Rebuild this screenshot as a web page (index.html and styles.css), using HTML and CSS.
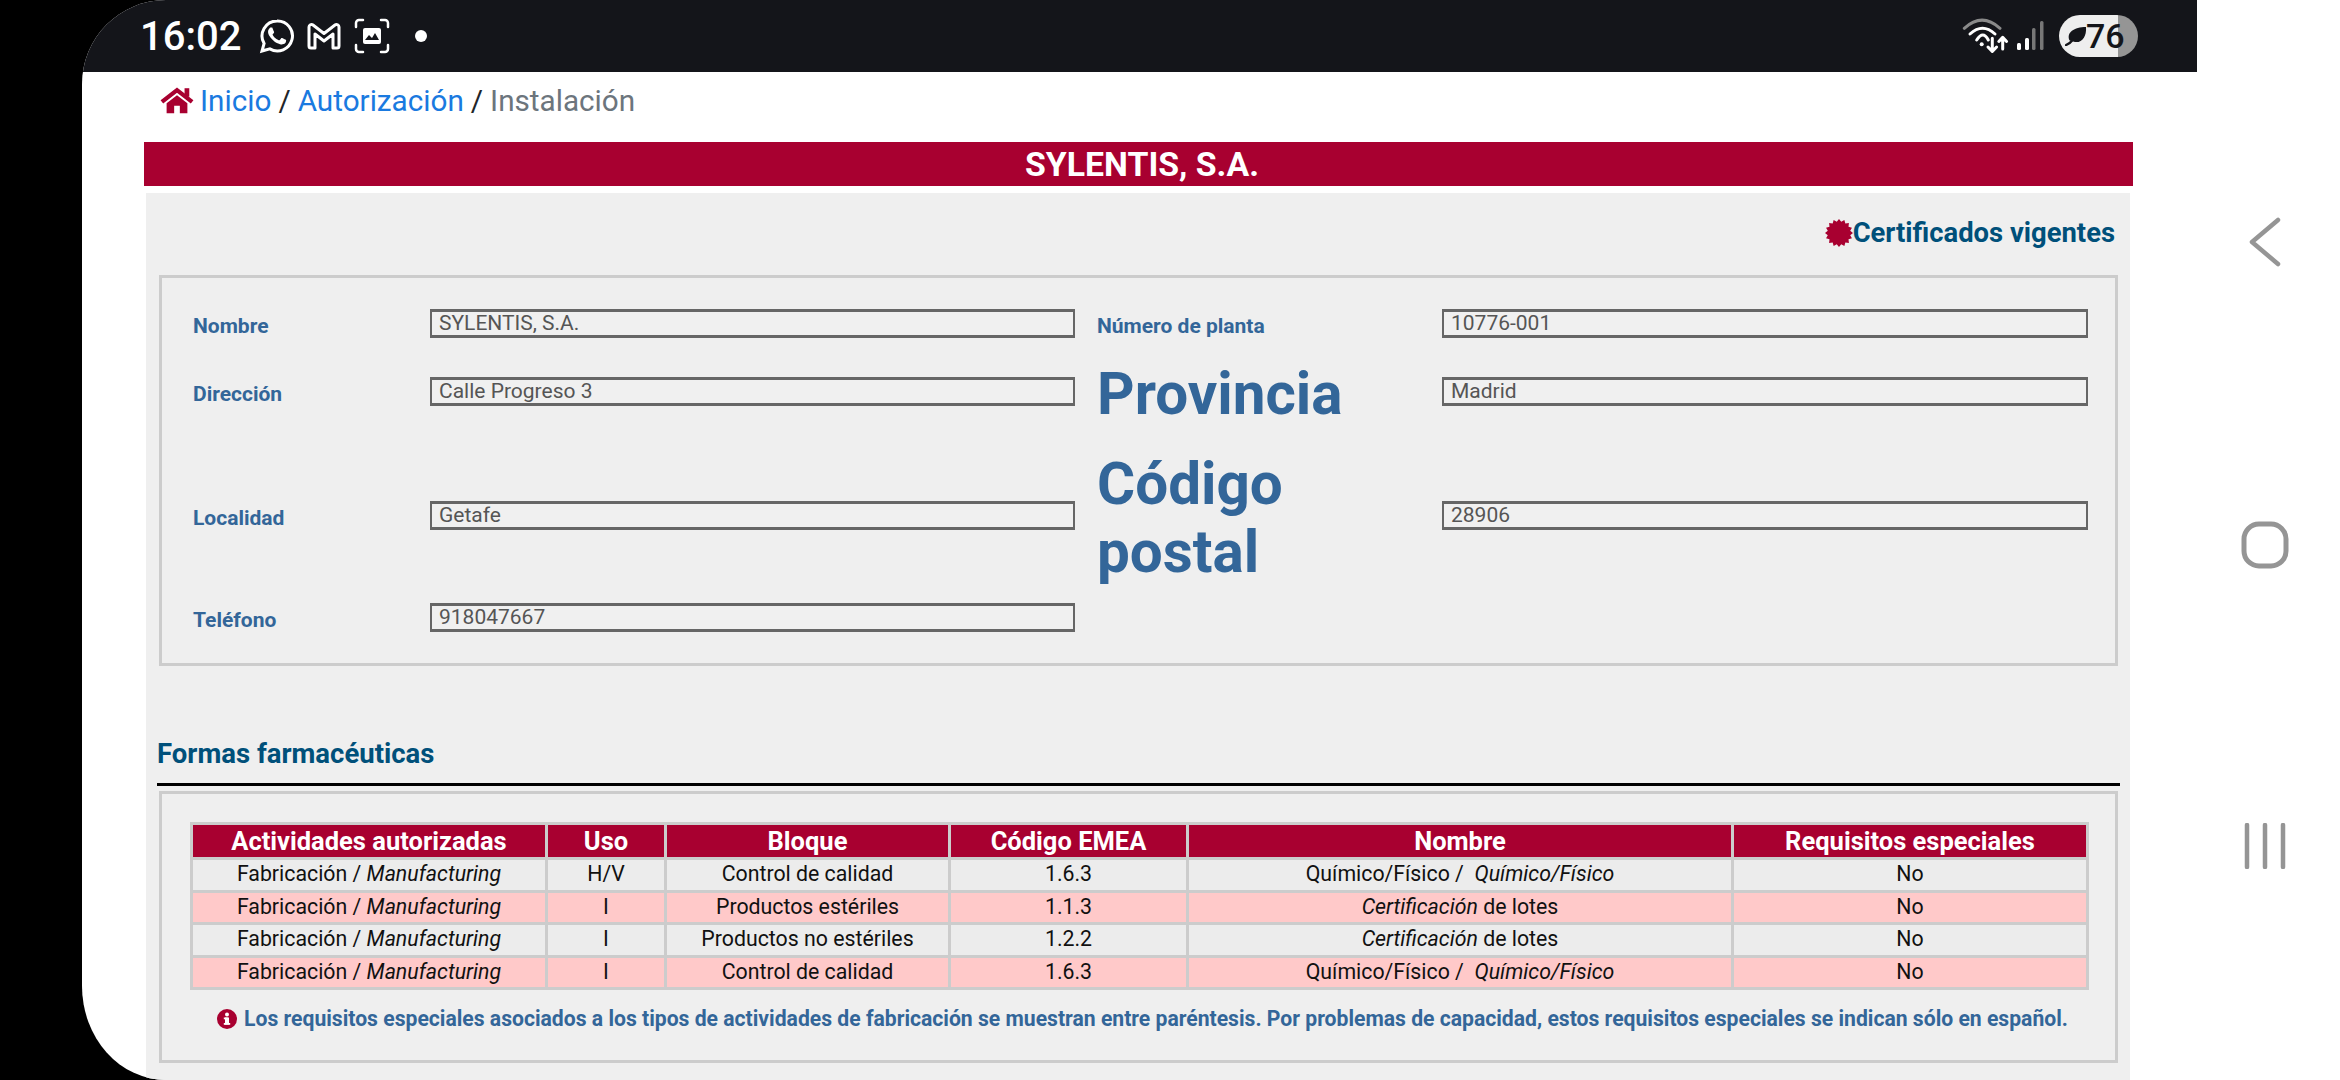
FILE: index.html
```html
<!DOCTYPE html>
<html lang="es">
<head>
    <meta charset="UTF-8">
    <meta name="viewport" content="width=device-width, initial-scale=1.0">
    <title>Instalación</title>
    <link rel="stylesheet" href="styles.css">
</head>
<body>
    <div class="screen">
        <div class="main">
            <div class="statusbar">
                <span class="time">16:02</span>
                <svg class="st-icon whatsapp" viewBox="0 0 24 24">
                    <path class="wa-ring" d="M12 2a10 10 0 0 0-8.6 15L2 22l5.2-1.4A10 10 0 1 0 12 2z"/>
                    <path class="wa-phone" d="M17.47 14.38c-.3-.15-1.76-.87-2.03-.97-.27-.1-.47-.15-.67.15-.2.3-.77.97-.94 1.17-.17.2-.35.22-.64.07-.3-.15-1.26-.46-2.39-1.47-.88-.79-1.48-1.76-1.65-2.06-.17-.3-.02-.46.13-.6.13-.13.3-.35.45-.52.15-.17.2-.3.3-.5.1-.2.05-.37-.02-.52-.08-.15-.67-1.61-.92-2.21-.24-.58-.49-.5-.67-.51h-.57c-.2 0-.52.07-.79.37-.27.3-1.04 1.02-1.04 2.48s1.07 2.88 1.21 3.07c.15.2 2.1 3.2 5.08 4.49.71.3 1.26.49 1.69.62.71.23 1.36.2 1.87.12.57-.09 1.76-.72 2.01-1.41.25-.7.25-1.29.17-1.41-.07-.13-.27-.2-.57-.35z"/>
                </svg>
                <svg class="st-icon gmail" viewBox="0 0 36 36">
                    <path d="M3 9a2.5 2.5 0 0 1 4-2L18 15.500 29 7a2.500 2.500 0 0 1 4 2V28a2 2 0 0 1-2 2H27V16L18 23 9 16V30H5a2 2 0 0 1-2-2z"/>
                </svg>
                <svg class="st-icon shot" viewBox="0 0 36 36">
                    <path class="shot-corners" d="M2 9V5a3 3 0 0 1 3-3h4M27 2h4a3 3 0 0 1 3 3v4M34 27v4a3 3 0 0 1-3 3h-4M9 34H5a3 3 0 0 1-3-3v-4"/>
                    <rect class="shot-photo" x="9" y="10" width="18" height="16" rx="2"/>
                    <path class="shot-hill" d="M11 22l4-5 3 3 3-5 4 7z"/>
                </svg>
                <span class="dot"></span>
                <div class="st-right">
                    <svg class="wifi" viewBox="0 0 52 36">
                        <path class="wifi-off" d="M4.300 10.300Q22-6 40 10.300"/>
                        <path class="wifi-on" d="M10 16Q22.500 4.600 35 16M16.700 22Q23 12 28.300 22"/>
                        <circle class="wifi-dot" cx="21.700" cy="26.300" r="2"/>
                        <path class="wifi-on" d="M32.300 20.300V33M28 29l4.300 4.500 4.300-4.500M42.700 31V19.500M38.800 23.500l3.900-4.200 3.900 4.200"/>
                    </svg>
                    <svg class="signal" viewBox="0 0 28 30">
                        <rect class="bar-on" x="1" y="22" width="4" height="7" rx="1.500"/>
                        <rect class="bar-on" x="9" y="17" width="4" height="12" rx="1.500"/>
                        <rect class="bar-off" x="16" y="7" width="3.500" height="22" rx="1.500"/>
                        <rect class="bar-off" x="24" y="0" width="3.500" height="29" rx="1.500"/>
                    </svg>
                    <div class="battery">
                        <svg class="leaf" viewBox="0 0 24 22">
                            <path d="M5 16C1 7 10 1 23 1 24 13 17 20 9 17z"/>
                            <path class="leaf-stem" d="M1 21C6 19 7 17 8.500 15"/>
                        </svg>
                        <span>76</span>
                    </div>
                </div>
            </div>

            <div class="breadcrumb">
                <svg class="home" viewBox="0 0 36 28">
                    <rect x="26" y="1" width="5" height="9"/>
                    <path class="home-roof" d="M2 15.500 18 3 34 15.500"/>
                    <path d="M7 17 18 8.500 29 17V27.500H21V19.500H15V27.500H7z"/>
                </svg>
                <a href="#">Inicio</a>
                <span class="sep">/</span>
                <a href="#">Autorización</a>
                <span class="sep">/</span>
                <span class="current">Instalación</span>
            </div>

            <div class="title">SYLENTIS, S.A.</div>

            <div class="panel">
                <div class="cert-row">
                    <svg class="cert-icon" viewBox="0 0 24 24">
                        <polygon points="24,12 21.610,13.910 23.090,16.590 20.150,17.440 20.490,20.490 17.440,20.150 16.590,23.090 13.910,21.610 12,24 10.090,21.610 7.410,23.090 6.560,20.150 3.510,20.490 3.850,17.440 0.910,16.590 2.390,13.910 0,12 2.390,10.090 0.910,7.410 3.850,6.560 3.510,3.510 6.560,3.850 7.410,0.910 10.090,2.390 12,0 13.910,2.390 16.590,0.910 17.440,3.850 20.490,3.510 20.150,6.560 23.090,7.410 21.610,10.090"/>
                    </svg>
                    <span>Certificados vigentes</span>
                </div>

                <div class="box form-grid">
                    <label class="lbl">Nombre</label>
                    <input class="field" value="SYLENTIS, S.A." readonly>
                    <label class="lbl">Número de planta</label>
                    <input class="field" value="10776-001" readonly>

                    <label class="lbl">Dirección</label>
                    <input class="field" value="Calle Progreso 3" readonly>
                    <label class="lbl big">Provincia</label>
                    <input class="field" value="Madrid" readonly>

                    <label class="lbl">Localidad</label>
                    <input class="field" value="Getafe" readonly>
                    <label class="lbl big">Código postal</label>
                    <input class="field" value="28906" readonly>

                    <label class="lbl">Teléfono</label>
                    <input class="field" value="918047667" readonly>
                </div>

                <h3 class="section">Formas farmacéuticas</h3>

                <div class="box table-box">
                    <table class="data">
                        <colgroup>
                            <col class="c1"><col class="c2"><col class="c3"><col class="c4"><col class="c5"><col class="c6">
                        </colgroup>
                        <thead>
                            <tr>
                                <th>Actividades autorizadas</th>
                                <th>Uso</th>
                                <th>Bloque</th>
                                <th>Código EMEA</th>
                                <th>Nombre</th>
                                <th>Requisitos especiales</th>
                            </tr>
                        </thead>
                        <tbody>
                            <tr>
                                <td>Fabricación / <i>Manufacturing</i></td>
                                <td>H/V</td>
                                <td>Control de calidad</td>
                                <td>1.6.3</td>
                                <td>Químico/Físico /&nbsp; <i>Químico/Físico</i></td>
                                <td>No</td>
                            </tr>
                            <tr class="pink">
                                <td>Fabricación / <i>Manufacturing</i></td>
                                <td>I</td>
                                <td>Productos estériles</td>
                                <td>1.1.3</td>
                                <td><i>Certificación</i> de lotes</td>
                                <td>No</td>
                            </tr>
                            <tr>
                                <td>Fabricación / <i>Manufacturing</i></td>
                                <td>I</td>
                                <td>Productos no estériles</td>
                                <td>1.2.2</td>
                                <td><i>Certificación</i> de lotes</td>
                                <td>No</td>
                            </tr>
                            <tr class="pink">
                                <td>Fabricación / <i>Manufacturing</i></td>
                                <td>I</td>
                                <td>Control de calidad</td>
                                <td>1.6.3</td>
                                <td>Químico/Físico /&nbsp; <i>Químico/Físico</i></td>
                                <td>No</td>
                            </tr>
                        </tbody>
                    </table>
                    <p class="note">
                        <svg class="info" viewBox="0 0 20 20">
                            <circle cx="10" cy="10" r="10"/>
                            <rect class="info-i" x="8" y="8.500" width="4" height="7"/>
                            <rect class="info-i" x="6.800" y="8.500" width="4" height="1.800"/>
                            <rect class="info-i" x="6.800" y="14" width="6.400" height="1.800"/>
                            <circle class="info-i" cx="10" cy="5.500" r="2"/>
                        </svg>
                        <span>Los requisitos especiales asociados a los tipos de actividades de fabricación se muestran entre paréntesis. Por problemas de capacidad, estos requisitos especiales se indican sólo en español.</span>
                    </p>
                </div>
            </div>
        </div>

        <div class="navkeys">
            <svg class="key-back" viewBox="0 0 32 50">
                <path d="M29 3 3 25 29 47"/>
            </svg>
            <svg class="key-home" viewBox="0 0 48 48">
                <rect x="3" y="3" width="42" height="42" rx="15"/>
            </svg>
            <svg class="key-recent" viewBox="0 0 46 46">
                <path d="M5 2V44M23 2V44M41 2V44"/>
            </svg>
        </div>
    </div>
</body>
</html>
```

FILE: styles.css
```css
* {
    box-sizing: border-box;
}
html, body {
    margin: 0;
    height: 100%;
}
body {
    background-color: #000;
    font-family: Roboto, "Liberation Sans", sans-serif;
    overflow: hidden;
}
.screen {
    display: flex;
    height: 1080px;
    margin-left: 82px;
    background-color: #fff;
    border-radius: 84px 0 0 84px / 84px 0 0 94px;
    overflow: hidden;
}
.main {
    width: 2115px;
    flex-shrink: 0;
}

/* status bar */
.statusbar {
    display: flex;
    align-items: center;
    height: 72px;
    padding: 0 59px 0 58px;
    background-color: #14151a;
    color: #fff;
}
.time {
    font-size: 40px;
    font-weight: 500;
    width: 119px;
}
.st-icon {
    width: 36px;
    height: 36px;
    margin-right: 11px;
}
.gmail {
    margin-right: 12px;
}
.wa-ring {
    fill: none;
    stroke: #fff;
    stroke-width: 2;
}
.wa-phone {
    fill: #fff;
}
.gmail path {
    fill: none;
    stroke: #fff;
    stroke-width: 3;
    stroke-linejoin: round;
}
.shot-corners {
    fill: none;
    stroke: #fff;
    stroke-width: 2.5;
    stroke-linecap: round;
}
.shot-photo {
    fill: #fff;
}
.shot-hill {
    fill: #14151a;
}
.dot {
    width: 12px;
    height: 12px;
    margin-left: 14px;
    border-radius: 50%;
    background-color: #fff;
}
.st-right {
    display: flex;
    align-items: center;
    margin-left: auto;
}
.wifi {
    width: 52px;
    height: 36px;
}
.wifi-off, .wifi-on {
    fill: none;
    stroke-linecap: round;
    stroke-linejoin: round;
    stroke-width: 3;
}
.wifi-off {
    stroke: #8a8a8a;
}
.wifi-on {
    stroke: #fff;
}
.wifi-dot {
    fill: #fff;
}
.signal {
    width: 28px;
    height: 30px;
    margin-left: 4px;
}
.bar-on {
    fill: #fff;
}
.bar-off {
    fill: #777;
}
.battery {
    display: flex;
    align-items: center;
    width: 79px;
    height: 42px;
    margin-left: 15px;
    padding-left: 6px;
    border-radius: 21px;
    background: linear-gradient(to right, #eee 75%, #959595 75%);
    color: #14151a;
    font-size: 34px;
    font-weight: 500;
}
.leaf {
    width: 22px;
    height: 20px;
    margin-right: -1px;
    flex-shrink: 0;
}
.leaf path {
    fill: #14151a;
}
.leaf .leaf-stem {
    fill: none;
    stroke: #14151a;
    stroke-width: 2.5;
    stroke-linecap: round;
}

/* breadcrumb */
.breadcrumb {
    display: flex;
    align-items: center;
    gap: 7px;
    height: 70px;
    padding: 0 0 13px 78px;
    font-size: 29.7px;
    color: #212529;
}
.breadcrumb a {
    color: #1a7ae0;
    text-decoration: none;
}
.breadcrumb .current {
    color: #6c757d;
}
.home {
    width: 34px;
    height: 27px;
    margin-right: -1px;
    fill: #a80030;
}
.home-roof {
    fill: none;
    stroke: #a80030;
    stroke-width: 4.5;
}

.title {
    width: 1989px;
    height: 44px;
    margin-left: 62px;
    padding: 1px 0 0 7px;
    background-color: #a80030;
    color: #fff;
    font-size: 33.8px;
    font-weight: 700;
    line-height: 44px;
    text-align: center;
}

/* panel */
.panel {
    width: 1984px;
    height: 887px;
    margin: 7px 0 0 64px;
    background-color: #efefef;
    overflow: hidden;
}
.cert-row {
    display: flex;
    align-items: center;
    justify-content: flex-end;
    height: 82px;
    padding: 0 15px 2px 0;
    color: #00507a;
    font-size: 27.4px;
    font-weight: 700;
}
.cert-icon {
    width: 28px;
    height: 28px;
    fill: #a80030;
}
.box {
    width: 1959px;
    margin-left: 13px;
    border: 3px solid #ccc;
}
.form-grid {
    display: grid;
    grid-template-columns: 237px 645px 367px 646px;
    grid-template-rows: 44px 92px 156px 48px;
    align-items: center;
    height: 391px;
    padding: 23px 0 20px 31px;
}
.lbl {
    padding-top: 5px;
    color: #336699;
    font-size: 21px;
    font-weight: 700;
}
.lbl.big {
    font-size: 58.4px;
    line-height: 68px;
    padding-top: 6px;
}
.form-grid .lbl:nth-child(4n+3) {
    margin-left: 22px;
}
.field {
    width: 100%;
    height: 29px;
    padding: 0 7px 1px;
    border: 2px solid #666;
    border-width: 3px 2px;
    background-color: #f0f0f0;
    color: #555;
    font-family: inherit;
    font-size: 21px;
    outline: none;
}

.section {
    width: 1963px;
    margin: 0 0 5px 11px;
    padding: 71px 0 12px;
    border-bottom: 3px solid #000;
    color: #00507a;
    font-size: 27.5px;
    font-weight: 700;
    line-height: 34px;
}
.table-box {
    height: 272px;
    padding: 28px 0 0 28px;
}

/* table */
.data {
    width: 1896px;
    table-layout: fixed;
    border-collapse: collapse;
    color: #111;
    font-size: 21.3px;
    text-align: center;
}
.c1 { width: 355px; }
.c2 { width: 119px; }
.c3 { width: 284px; }
.c4 { width: 238px; }
.c5 { width: 545px; }
.c6 { width: 355px; }
.data th, .data td {
    padding: 0;
    border: 3px solid #ccc;
}
.data th {
    height: 35px;
    background-color: #a80030;
    color: #fff;
    font-size: 25.5px;
    font-weight: 700;
}
.data td {
    height: 32.5px;
    padding-bottom: 2px;
    background-color: #ececec;
}
.data .pink td {
    background-color: #ffc9c9;
}
.note {
    display: flex;
    align-items: center;
    justify-content: center;
    gap: 7px;
    width: 1905px;
    margin: 16px 0 0;
    color: #336699;
    font-size: 21.15px;
    font-weight: 700;
}
.info {
    width: 20px;
    height: 20px;
    fill: #a80030;
}
.info .info-i {
    fill: #fff;
}

/* android keys */
.navkeys {
    display: flex;
    flex-direction: column;
    align-items: center;
    gap: 254px;
    flex: 1;
    padding: 217px 7px 0 0;
}
.navkeys svg {
    fill: none;
    stroke: #959595;
    stroke-linecap: round;
    stroke-linejoin: round;
}
.key-back {
    width: 32px;
    height: 50px;
    stroke-width: 4.5;
}
.key-home {
    width: 48px;
    height: 48px;
    stroke-width: 5;
}
.key-recent {
    width: 46px;
    height: 46px;
    stroke-width: 4.5;
}
```
